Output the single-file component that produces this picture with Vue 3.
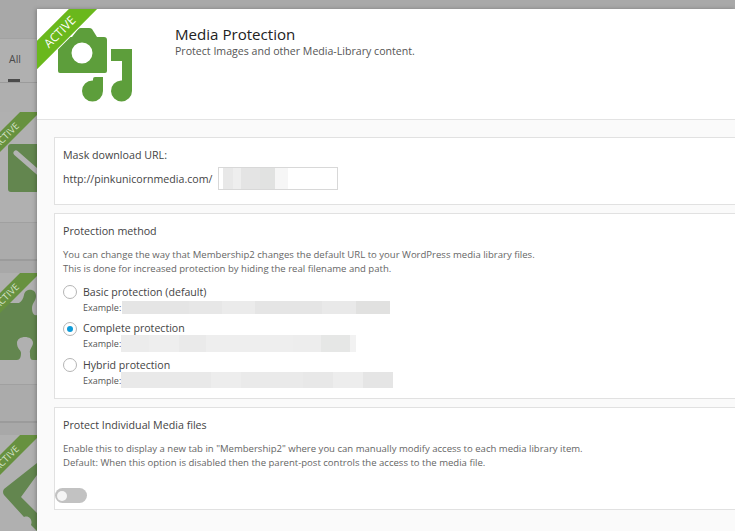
<script setup>
const methods = [
  { label: 'Basic protection (default)', checked: false, segs: [[67,'#e5e5e5'],[33,'#e7e7e7'],[33,'#ebebeb'],[67,'#e5e5e5'],[34,'#e9e9e9'],[34,'#e1e1e0']], left: 1, h: 13 },
  { label: 'Complete protection', checked: true, segs: [[28,'#ececec'],[30,'#eeeeee'],[27,'#eaeaea'],[87,'#eeeeee'],[28,'#ededed'],[29,'#e6e7e6'],[6,'#f2f2f2']], left: 0, h: 17 },
  { label: 'Hybrid protection', checked: false, segs: [[90,'#e9e9e9'],[30,'#ededed'],[62,'#eaeaea'],[30,'#e8e8e8'],[30,'#ededed'],[30,'#e5e5e5']], left: 0, h: 16 }
]
</script>

<template>
  <div class="page">
    <aside class="backdrop">
      <div class="strip-top"></div>
      <div class="tabs">
        <span class="tab">All</span>
        <span class="tab-line"></span>
      </div>
      <div class="addon first">
        <svg class="addon-icon" width="37" height="110" viewBox="0 0 37 110">
          <rect x="8" y="32" width="40" height="48" rx="3" fill="#63864f" />
          <path d="M16 41 L40 62" stroke="#b3b3b3" stroke-width="5" stroke-linecap="round" />
        </svg>
        <div class="ribbon"><span>ACTIVE</span></div>
      </div>
      <div class="addon-foot"></div>
      <div class="addon">
        <svg class="addon-icon" width="37" height="110" viewBox="0 0 37 110">
          <path d="M0 30 H19 C22 28 23 26 24 22 C25 15 36 15 36 23 C36 28 32 30 32 35 C32 40 34 43 37 42 V87 H33 C30 87 30 84 30 80 C29 77 33 73 33 70 C33 62 17 62 17 70 C17 76 21 77 21 80 C21 84 20 87 17 87 H0 Z" fill="#63864f" />
        </svg>
        <div class="ribbon"><span>ACTIVE</span></div>
      </div>
      <div class="addon-foot"></div>
      <div class="addon">
        <svg class="addon-icon" width="37" height="96" viewBox="0 0 37 96">
          <path d="M4 54 L37 28 V40 L21 62 L37 78 V96 L31 90 C33 85 29 80 24 82 L4 60 Q2 57 4 54 Z" fill="#63864f" />
        </svg>
        <div class="ribbon"><span>ACTIVE</span></div>
      </div>
    </aside>

    <main class="modal">
      <header class="head">
        <div class="logo">
          <svg class="logo-svg" width="100" height="100" viewBox="0 0 100 100">
            <path d="M4 21 Q4 18 7 18 H18 L24 10 Q25 9 27 9 H35 Q37 9 38 10 L43 18 H50 Q53 18 53 21 V52 Q53 54 51 54 H6 Q4 54 4 52 Z M28 23.500 A10.500 10.500 0 1 0 28 44.500 A10.500 10.500 0 1 0 28 23.500 Z" fill="#5d9e3b" fill-rule="evenodd" />
            <path d="M57 30 H78 V72 A10.500 10.500 0 1 1 67 61.500 H68 V42 H57 Z" fill="#5d9e3b" />
            <path d="M49 58 V72 A10.500 10.500 0 1 1 38.500 61.500 H39 V60 Q39 58 41 58 Z" fill="#5d9e3b" />
          </svg>
          <div class="banner"><span>ACTIVE</span></div>
        </div>
        <div class="head-text">
          <h1>Media Protection</h1>
          <p>Protect Images and other Media-Library content.</p>
        </div>
      </header>

      <div class="body">
        <section class="card card-mask">
          <h2 class="mask-title">Mask download URL:</h2>
          <div class="url-row">
            <span>http://pinkunicornmedia.com/</span>
            <div class="url-input">
              <i class="b0"></i><i class="b1"></i><i class="b2"></i><i class="b3"></i><i class="b4"></i><i class="b5"></i>
            </div>
          </div>
        </section>

        <section class="card card-method">
          <h2>Protection method</h2>
          <p class="desc">You can change the way that Membership2 changes the default URL to your WordPress media library files.<br />This is done for increased protection by hiding the real filename and path.</p>
          <div class="options">
            <div v-for="m in methods" :key="m.label" class="option">
              <span class="radio" :class="{ on: m.checked }"></span>
              <div class="opt-text">
                <div class="opt-label">{{ m.label }}</div>
                <div class="example">
                  <span>Example:</span>
                  <span class="blur" :style="{ height: m.h + 'px', marginLeft: m.left + 'px' }">
                    <i v-for="(s, i) in m.segs" :key="i" :style="{ width: s[0] + 'px', background: s[1] }"></i>
                  </span>
                </div>
              </div>
            </div>
          </div>
        </section>

        <section class="card card-toggle">
          <h2>Protect Individual Media files</h2>
          <p class="desc">Enable this to display a new tab in "Membership2" where you can manually modify access to each media library item.<br />Default: When this option is disabled then the parent-post controls the access to the media file.</p>
          <div class="toggle"><span class="knob"></span></div>
        </section>
      </div>
    </main>
  </div>
</template>

<style>
html, body { margin: 0; padding: 0; overflow: hidden; }
</style>

<style scoped>
.page {
  width: 735px;
  height: 531px;
  display: flex;
  overflow: hidden;
  font-family: "Open Sans", "Liberation Sans", sans-serif;
  background: #a9a9a9;
}
.backdrop {
  width: 37px;
  flex: none;
  display: flex;
  flex-direction: column;
  background: #afafaf;
  overflow: hidden;
}
.strip-top { height: 39px; flex: none; background: #a8a8a8; border-bottom: 1px solid #a2a2a2; box-sizing: border-box; }
.tabs { height: 44px; flex: none; padding: 13px 0 0 9px; box-sizing: border-box; background: #b0b0b0; border-bottom: 1px solid #9b9b9b; }
.tab { font-size: 10.5px; color: #4a4a4a; line-height: 14px; display: block; }
.tab-line { display: block; width: 12px; height: 3px; margin-top: 13px; margin-left: -1px; background: #4b4b4b; }
.addon { height: 111px; position: relative; background: #b0b0b0; flex: none; overflow: hidden; }
.addon.first { margin-top: 29px; height: 110px; }
.addon-foot { height: 51px; flex: none; background: #ababab; border-top: 1px solid #a0a0a0; box-sizing: border-box; position: relative; }
.addon-foot::after { content: ""; position: absolute; left: 0; right: 0; top: 36px; bottom: 0; border-top: 2px solid #9b9b9b; background: #a8a8a8; }
.addon-icon { position: absolute; left: 0; top: 0; }
.ribbon {
  position: absolute;
  left: -37px;
  top: 10px;
  width: 100px;
  height: 14px;
  background: #67913f;
  transform: rotate(-45deg);
  display: flex;
  justify-content: center;
  align-items: center;
}
.ribbon span { color: #d8e5cd; font-size: 9.5px; line-height: 1; position: relative; left: -9px; }

.modal {
  flex: 1;
  margin-top: 9px;
  min-width: 0;
  background: #fafafa;
  box-shadow: -1px 0 4px rgba(0, 0, 0, 0.25);
  position: relative;
  color: #444;
}
.head {
  height: 111px;
  box-sizing: border-box;
  background: #fff;
  border-bottom: 1px solid #e3e3e3;
  display: flex;
  overflow: hidden;
}
.logo { width: 138px; flex: none; position: relative; overflow: hidden; }
.logo-svg { position: absolute; left: 17px; top: 10px; }
.banner {
  position: absolute;
  left: -27.5px;
  top: 12.5px;
  width: 100px;
  height: 20px;
  background: #6ab81c;
  box-shadow: 0 0 0 1px #fff;
  transform: rotate(-45deg);
  display: flex;
  align-items: center;
  justify-content: center;
}
.banner span { color: #fff; font-size: 12px; line-height: 1; }
.head-text { padding-top: 15px; }
.head-text h1 { margin: 0; font-size: 15.1px; line-height: 20px; font-weight: 500; color: #222; }
.head-text p { margin: 1px 0 0; font-size: 10.6px; line-height: 12px; color: #555; }
.body { padding: 17px 0 0 17px; display: flex; flex-direction: column; gap: 8px; }
.card {
  box-sizing: border-box;
  width: 720px;
  background: #fff;
  border: 1px solid #e1e1e1;
  padding: 9px 8px;
}
.card-mask { height: 68px; }
.card-method { height: 186px; }
.card-toggle { height: 103px; }
h2 { margin: 0; font-size: 10.7px; line-height: 16px; font-weight: 400; color: #444; }
.url-row { display: flex; align-items: center; gap: 6px; margin-top: 4px; font-size: 10.64px; color: #444; }
.url-input {
  width: 120px;
  height: 23px;
  box-sizing: border-box;
  border: 1px solid #d8d8d8;
  display: flex;
  align-items: center;
}
.url-input i { display: block; height: 21px; }
.b0 { width: 4px; }
.b1 { width: 10px; background: #e8e8e8; }
.b2 { width: 8px; background: #eeeeee; }
.b3 { width: 19px; background: #e4e4e4; }
.b4 { width: 15px; background: #e1e2e1; }
.b5 { width: 13px; background: #f6f6f6; }
.desc { margin: 9px 0 0; font-size: 9.56px; line-height: 14px; color: #666; }
.options { margin-top: 8.5px; display: flex; flex-direction: column; gap: 7.5px; }
.option { display: flex; gap: 6px; }
.radio {
  width: 14px;
  height: 14px;
  box-sizing: border-box;
  border-radius: 50%;
  border: 1px solid #b5b5b5;
  background: #fff;
  flex: none;
  position: relative;
  margin-top: 0.5px;
}
.radio.on::after {
  content: "";
  position: absolute;
  left: 3px;
  top: 3px;
  width: 6px;
  height: 6px;
  border-radius: 50%;
  background: #0e9bd8;
}
.opt-label { font-size: 10.6px; line-height: 15px; color: #444; }
.example { display: flex; align-items: center; height: 13px; margin-top: 1px; font-size: 9px; color: #555; white-space: nowrap; }
.blur { display: inline-flex; }
.blur i { display: block; height: 100%; }
.toggle {
  width: 32px;
  height: 15px;
  border-radius: 8px;
  background: #c2c2c2;
  margin: 18px 0 0 -8px;
  position: relative;
}
.knob {
  position: absolute;
  left: 2px;
  top: 2.5px;
  width: 10px;
  height: 10px;
  border-radius: 50%;
  background: #f5f5f5;
}
</style>
